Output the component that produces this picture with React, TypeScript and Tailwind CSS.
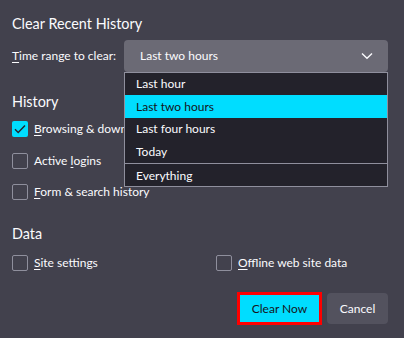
import React from "react";

const font = { fontFamily: "Lato, 'Liberation Sans', sans-serif" };

function Box({ checked }: { checked?: boolean }) {
  if (checked) {
    return (
      <div className="w-4 h-4 rounded-[2px] bg-[#00ddff] flex items-center justify-center shrink-0">
        <svg width="12" height="10" viewBox="0 0 12 10" fill="none">
          <path d="M1 5.2 L4.2 8.4 L11 1.4" stroke="#23222b" strokeWidth="1.4" />
        </svg>
      </div>
    );
  }
  return <div className="w-4 h-4 rounded-[2px] border border-[#8f8f9d] shrink-0" />;
}

function Check({ checked, pre = "", k, rest }: { checked?: boolean; pre?: string; k: string; rest: string }) {
  return (
    <div className="flex items-center gap-[6px] h-4">
      <Box checked={checked} />
      <span className="text-[12px] leading-4 whitespace-nowrap">
        {pre}
        <span className="underline underline-offset-2">{k}</span>
        {rest}
      </span>
    </div>
  );
}

export default function App() {
  return (
    <div
      style={font}
      className="relative w-[404px] h-[338px] bg-[#42414d] text-[#fbfbfe] pl-3 pr-4 pt-[14px] overflow-hidden"
    >
      <div className="text-[14.4px] leading-5">Clear Recent History</div>
      <div className="flex items-center mt-[6px] h-8">
        <div className="w-[112px] text-[12px] whitespace-nowrap">
          <span className="underline underline-offset-2">T</span>ime range to clear:
        </div>
        <div className="flex-1 h-8 rounded-[4px] bg-[#6b6a75] flex items-center justify-between pl-4 pr-[15px] text-[12px]">
          <span>Last two hours</span>
          <svg width="12" height="8" viewBox="0 0 12 8" fill="none">
            <path d="M1 1.5 L6 6.2 L11 1.5" stroke="#fbfbfe" strokeWidth="1.4" />
          </svg>
        </div>
      </div>

      <div className="text-[14.4px] leading-5 mt-[20px]">History</div>
      <div className="flex flex-col gap-[15.5px] mt-[9px]">
        <Check checked k="B" rest="rowsing & download history" />
        <Check pre="Active " k="l" rest="ogins" />
        <Check k="F" rest="orm & search history" />
      </div>

      <div className="text-[14.4px] leading-5 mt-[24px]">Data</div>
      <div className="flex mt-[11px]">
        <div className="w-[204px]">
          <Check k="S" rest="ite settings" />
        </div>
        <Check k="O" rest="ffline web site data" />
      </div>

      <div className="flex justify-end items-center gap-[5px] mt-[21px]">
        <div className="h-[33px] w-[85px] border-[3px] border-[#ff0000] bg-[#00ddff] text-[#15141a] text-[12px] flex items-center justify-center">
          Clear Now
        </div>
        <div className="h-[31px] w-[61px] rounded-[4px] bg-[#53525e] text-[12px] flex items-center justify-center">
          Cancel
        </div>
      </div>

      <div className="absolute left-[124px] top-[72px] w-[264px] bg-[#23222b] border border-[#8f8f9d] text-[12px]">
        <div className="h-[22px] flex items-center pl-[11px]">Last hour</div>
        <div className="h-[23px] flex items-center pl-[11px] bg-[#00ddff] text-[#15141a]">Last two hours</div>
        <div className="h-[22px] flex items-center pl-[11px]">Last four hours</div>
        <div className="h-[23px] flex items-center pl-[11px]">Today</div>
        <div className="h-[2px] border-t border-[#8f8f9d]" />
        <div className="h-[21px] flex items-center pl-[11px]">Everything</div>
      </div>
    </div>
  );
}
